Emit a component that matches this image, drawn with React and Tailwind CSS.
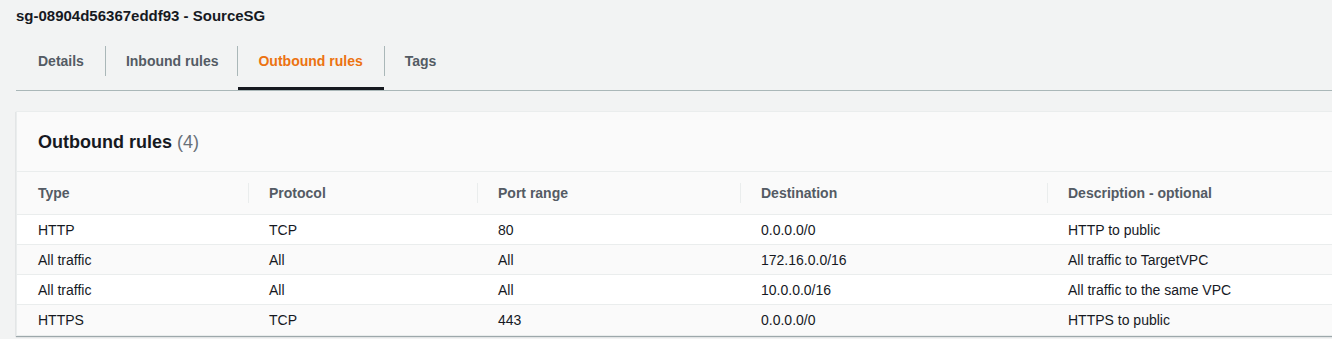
import React from 'react';

const tabs = [
  { label: 'Details', pad: 'pl-[22px] pr-[21px]' },
  { label: 'Inbound rules', pad: 'pl-5 pr-[19px]' },
  { label: 'Outbound rules', pad: 'pl-5 pr-[21px]', active: true },
  { label: 'Tags', pad: 'px-5' },
];

const columns = [
  { label: 'Type', width: 'w-[231px]' },
  { label: 'Protocol', width: 'w-[229px]' },
  { label: 'Port range', width: 'w-[263px]' },
  { label: 'Destination', width: 'w-[307px]' },
  { label: 'Description - optional', width: 'flex-1' },
];

const rules = [
  ['HTTP', 'TCP', '80', '0.0.0.0/0', 'HTTP to public'],
  ['All traffic', 'All', 'All', '172.16.0.0/16', 'All traffic to TargetVPC'],
  ['All traffic', 'All', 'All', '10.0.0.0/16', 'All traffic to the same VPC'],
  ['HTTPS', 'TCP', '443', '0.0.0.0/0', 'HTTPS to public'],
];

export default function App() {
  return (
    <div
      className="h-[339px] w-full overflow-hidden bg-[#f2f3f3] pl-4 text-[#16191f]"
      style={{ fontFamily: '"Liberation Sans", Arial, sans-serif' }}
    >
      {/* security group title */}
      <div className="pt-[6px] text-[15px] font-bold leading-[20px]">sg-08904d56367eddf93 - SourceSG</div>

      {/* tabs */}
      <div className="mt-5 flex border-b border-[#aab7b8]">
        {tabs.map((tab, i) => (
          <div key={tab.label} className="flex flex-col">
            <div
              className={`flex h-[30px] items-center text-sm font-bold ${tab.pad} ${
                i === 0 ? '' : 'border-l border-[#aab7b8]'
              } ${tab.active ? 'text-[#ec7211]' : 'text-[#545b64]'}`}
            >
              {tab.label}
            </div>
            <div className="h-[11px]" />
            <div className={`h-[3px] ${tab.active ? 'ml-px bg-[#16191f]' : ''}`} />
          </div>
        ))}
      </div>

      {/* outbound rules card */}
      <div className="mt-5 border border-r-0 border-[#eaeded] bg-[#fafafa] shadow-[0_1px_1px_0_rgba(0,28,36,0.35)]">
        <div className="flex h-[60px] items-center border-b border-[#eaeded] pl-[21px]">
          <h2 className="text-[18px] font-bold leading-6">
            Outbound rules <span className="font-normal text-[#687078]">(4)</span>
          </h2>
        </div>

        <div className="flex h-[43px] items-center border-b border-[#eaeded] text-sm font-bold text-[#545b64]">
          {columns.map((col, i) => (
            <div key={col.label} className={`${col.width} flex h-full items-center`}>
              {i > 0 && <div className="h-5 w-px bg-[#eaeded]" />}
              <span className={i === 0 ? 'pl-[21px]' : 'pl-5'}>{col.label}</span>
            </div>
          ))}
        </div>

        {rules.map((row, r) => (
          <div
            key={r}
            className={`flex h-[30px] items-center text-sm ${
              r < rules.length - 1 ? 'border-b border-[#eaeded]' : ''
            } ${r % 2 === 0 ? 'bg-white' : 'bg-[#fafafa]'}`}
          >
            {row.map((cell, c) => (
              <div key={c} className={`${columns[c].width} pl-[21px]`}>
                {cell}
              </div>
            ))}
          </div>
        ))}
      </div>
    </div>
  );
}
